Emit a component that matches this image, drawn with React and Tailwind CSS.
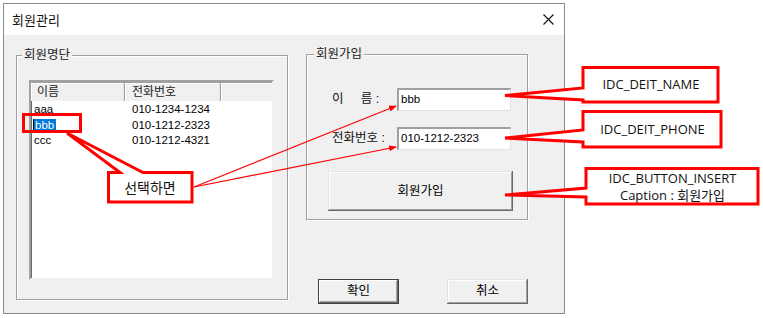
import React from "react";

const KR = { fontFamily: '"Liberation Sans", "Noto Sans CJK KR", sans-serif' };
const ANN = { fontFamily: '"Open Sans", "Noto Sans CJK KR", sans-serif' };

function GroupBox({ label, className, labelClass, children }) {
  return (
    <div
      className={
        "relative border border-[#a0a0a0] shadow-[inset_1px_1px_0_#ffffff,1px_1px_0_#ffffff] " +
        className
      }
    >
      <div
        className={
          "absolute top-[-9px] bg-[#f0f0f0] px-[2px] text-[12.5px] leading-[16px] text-[#222] " +
          labelClass
        }
      >
        {label}
      </div>
      {children}
    </div>
  );
}

function WinButton({ children, className, isDefault }) {
  return (
    <div
      className={
        "flex items-center justify-center bg-[#f0f0f0] text-[12.5px] text-black " +
        (isDefault
          ? "border border-[#404040] shadow-[inset_-1px_-1px_0_#696969,inset_1px_1px_0_#ffffff,inset_-2px_-2px_0_#a0a0a0] "
          : "shadow-[inset_-1px_-1px_0_#696969,inset_1px_1px_0_#e3e3e3,inset_-2px_-2px_0_#a0a0a0,inset_2px_2px_0_#ffffff] ") +
        className
      }
    >
      {children}
    </div>
  );
}

function Edit({ value }) {
  return (
    <div className="w-[114px] h-[23px] bg-white border-t-2 border-l-2 border-r border-b border-t-[#a0a0a0] border-l-[#a0a0a0] border-r-[#e3e3e3] border-b-[#e3e3e3] flex items-center pl-[2px] text-[11.5px] text-black">
      {value}
    </div>
  );
}

export default function App() {
  return (
    <div className="relative w-[763px] h-[318px] bg-white overflow-hidden pl-[3px] pt-[3px]" style={KR}>
      {/* Dialog */}
      <div className="w-[562px] h-[311px] border border-[#8a8a8a] flex flex-col">
        <div className="h-[31px] bg-white flex items-center justify-between pl-[8px] pr-[10px]">
          <span className="text-[13px] text-[#111]" style={{ fontFamily: '"Noto Sans CJK KR", sans-serif' }}>
            회원관리
          </span>
          <svg width="11" height="11" viewBox="0 0 11 11">
            <path d="M0.5 0.5 L10.5 10.5 M10.5 0.5 L0.5 10.5" stroke="#111" strokeWidth="1.1" fill="none" />
          </svg>
        </div>
        <div className="flex-1 bg-[#f0f0f0] flex items-start pl-[12px] pt-[20px] gap-[18px]">
          {/* Group 1 */}
          <GroupBox label="회원명단" className="w-[272px] h-[245px]" labelClass="left-[5px]">
            <div className="ml-[12px] mt-[24px] w-[245px] h-[200px] bg-white border-2 border-t-[#a0a0a0] border-l-[#a0a0a0] border-r-[#f0f0f0] border-b-[#f0f0f0] shadow-[inset_1px_1px_0_#696969] flex flex-col">
              <div className="flex h-[19px] bg-[#f0f0f0] text-[12px] text-[#222] border-t border-[#a0a0a0]">
                <div className="w-[94px] pl-[6px] flex items-center border-r border-r-[#a0a0a0] shadow-[inset_1px_1px_0_#ffffff,inset_-1px_0_0_#e3e3e3]">
                  이름
                </div>
                <div className="w-[96px] pl-[7px] flex items-center border-r border-r-[#a0a0a0] shadow-[inset_1px_1px_0_#ffffff,inset_-1px_0_0_#e3e3e3]">
                  전화번호
                </div>
                <div className="flex-1 shadow-[inset_1px_1px_0_#ffffff]" />
              </div>
              <div className="flex flex-col pt-[1px] text-[11.5px] text-black leading-[15.5px]">
                <div className="flex h-[15.5px]">
                  <div className="w-[94px] pl-[3px]">aaa</div>
                  <div className="pl-[7px]">010-1234-1234</div>
                </div>
                <div className="flex h-[15.5px]">
                  <div className="w-[94px] pl-[2px] flex items-center">
                    <span className="inline-block h-[12px] leading-[12px] bg-[#0078d7] text-white px-[1px] pr-[2px] border-l border-black">bbb</span>
                  </div>
                  <div className="pl-[7px]">010-1212-2323</div>
                </div>
                <div className="flex h-[15.5px]">
                  <div className="w-[94px] pl-[3px]">ccc</div>
                  <div className="pl-[7px]">010-1212-4321</div>
                </div>
              </div>
            </div>
          </GroupBox>

          {/* Right column */}
          <div className="flex flex-col w-[222px] -mt-[1px]">
            <GroupBox label="회원가입" className="w-[222px] h-[166px]" labelClass="left-[7px]">
              <div className="flex flex-col pt-[33px] pl-[25px] text-[12.5px] text-[#111]">
                <div className="flex items-center">
                  <div className="w-[65px] whitespace-pre">이     름 :</div>
                  <Edit value="bbb" />
                </div>
                <div className="flex items-center mt-[16px]">
                  <div className="w-[65px] whitespace-pre">전화번호 :</div>
                  <Edit value="010-1212-2323" />
                </div>
                <WinButton className="w-[185px] h-[40px] -ml-[4px] mt-[21px]">회원가입</WinButton>
              </div>
            </GroupBox>
            <div className="flex justify-between pl-[12px] mt-[59px]">
              <WinButton isDefault className="w-[81px] h-[25px]">확인</WinButton>
              <WinButton className="w-[81px] h-[25px]">취소</WinButton>
            </div>
          </div>
        </div>
      </div>

      {/* Annotation drawing */}
      <svg className="absolute left-0 top-0 pointer-events-none" width="763" height="318" viewBox="0 0 763 318">
        <defs>
          <marker id="ah" markerWidth="8" markerHeight="8" refX="7" refY="4" orient="auto" markerUnits="userSpaceOnUse">
            <path d="M0 1 L8 4 L0 7 Z" fill="#ff0000" />
          </marker>
        </defs>
        <rect x="23.5" y="114.5" width="57" height="17" fill="none" stroke="#ff0000" strokeWidth="3" />
        <path
          d="M108.5 172.5 L120 172.5 L67 133 L143 172.5 L192 172.5 L192 202 L108.5 202 Z"
          fill="#ffffff"
          stroke="#ff0000"
          strokeWidth="3"
          strokeLinejoin="miter"
        />
        <line x1="194" y1="187" x2="396" y2="106" stroke="#ff0000" strokeWidth="1.2" markerEnd="url(#ah)" />
        <line x1="194" y1="187" x2="396" y2="147" stroke="#ff0000" strokeWidth="1.2" markerEnd="url(#ah)" />
        <path
          d="M583 67.5 L718 67.5 L718 102 L583 102 L583 100 L505 95.5 L583 88 Z"
          fill="#ffffff"
          stroke="#ff0000"
          strokeWidth="3"
        />
        <path
          d="M583 111.5 L721 111.5 L721 147 L583 147 L583 142 L505 138 L583 130 Z"
          fill="#ffffff"
          stroke="#ff0000"
          strokeWidth="3"
        />
        <path
          d="M586 168.5 L758 168.5 L758 204 L586 204 L586 197 L505 195 L586 188 Z"
          fill="#ffffff"
          stroke="#ff0000"
          strokeWidth="3"
        />
      </svg>

      {/* Annotation texts */}
      <div className="absolute left-[109px] top-[174px] w-[82px] h-[27px] flex items-center justify-center text-[14px] text-[#111]" style={ANN}>
        선택하면
      </div>
      <div className="absolute left-[585px] top-[69px] w-[132px] h-[32px] flex items-center justify-center text-[13px] text-[#111]" style={ANN}>
        IDC_DEIT_NAME
      </div>
      <div className="absolute left-[585px] top-[113px] w-[135px] h-[33px] flex items-center justify-center text-[13px] text-[#111]" style={ANN}>
        IDC_DEIT_PHONE
      </div>
      <div className="absolute left-[588px] top-[170px] w-[169px] h-[34px] flex flex-col items-center justify-center text-[13px] text-[#111]" style={ANN}>
        <div className="leading-[17px] h-[17px]">IDC_BUTTON_INSERT</div>
        <div className="leading-[17px] h-[17px]">Caption : 회원가입</div>
      </div>
    </div>
  );
}
